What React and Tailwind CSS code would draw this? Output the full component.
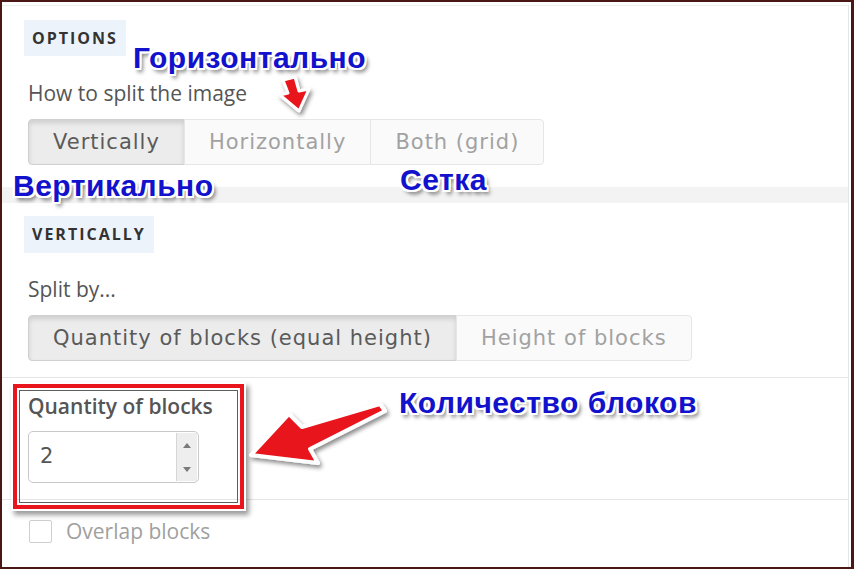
import React from "react";

const anno =
  "absolute whitespace-nowrap font-['Liberation_Sans',Arial,sans-serif] font-bold text-[30px] leading-none tracking-[0.5px] text-[#1212cc] [text-shadow:1px_1px_0_#fff,-1px_-1px_0_#fff,1px_-1px_0_#fff,-1px_1px_0_#fff,2px_0_0_#fff,-2px_0_0_#fff,0_2px_0_#fff,0_-2px_0_#fff,2px_2px_0_#fff,-2px_-2px_0_#fff,2px_-2px_0_#fff,-2px_2px_0_#fff,3px_4px_4px_rgba(0,0,0,0.6)]";

function Segmented({ items, active }) {
  return (
    <div className="flex font-['DejaVu_Sans',sans-serif] text-[21px] tracking-[1px]">
      {items.map((label, i) => {
        const isActive = i === active;
        const first = i === 0;
        const last = i === items.length - 1;
        return (
          <div
            key={label}
            className={
              "h-[46px] leading-[44px] px-6 border whitespace-nowrap " +
              (first ? "rounded-l-[4px] " : "-ml-px ") +
              (last ? "rounded-r-[4px] " : "") +
              (isActive
                ? "bg-[#ececec] text-[#5a5a5a] border-[#d0d0d0] shadow-[inset_0_3px_5px_rgba(0,0,0,0.13)]"
                : "bg-[#fafafa] text-[#a2a2a2] border-[#e6e6e6]")
            }
          >
            {label}
          </div>
        );
      })}
    </div>
  );
}

export default function App() {
  return (
    <div className="relative w-[854px] h-[569px] overflow-hidden bg-white border-2 border-r-[3px] border-[#4a1616] font-['Open_Sans',sans-serif]">
      <div className="mr-[2px] h-full border-r border-[#e6e6e6]">
        {/* Panel 1 */}
        <div className="mt-[3px] border-t border-[#eeeeee] pl-[22px] pt-[14px] pb-[22px]">
          <div className="inline-block h-[36px] px-2 bg-[#edf3fb] text-[16px] font-bold tracking-[2px] leading-[36px] text-[#333]">
            OPTIONS
          </div>
          <div className="mt-[23px] ml-[4px] text-[21px] leading-[28px] text-[#555]">
            How to split the image
          </div>
          <div className="mt-[12px] ml-[4px]">
            <Segmented items={["Vertically", "Horizontally", "Both (grid)"]} active={0} />
          </div>
        </div>

        {/* strip */}
        <div className="h-[16px] bg-[#f3f3f3]" />

        {/* Panel 2 */}
        <div className="pl-[22px] pt-[13px] pb-[16px]">
          <div className="inline-block h-[37px] px-2 bg-[#edf3fb] text-[16px] font-bold tracking-[2px] leading-[37px] text-[#333]">
            VERTICALLY
          </div>
          <div className="mt-[22px] ml-[4px] text-[21px] leading-[28px] text-[#555]">
            Split by...
          </div>
          <div className="mt-[12px] ml-[4px]">
            <Segmented items={["Quantity of blocks (equal height)", "Height of blocks"]} active={0} />
          </div>
        </div>

        {/* Quantity section */}
        <div className="border-t border-b border-[#e6e6e6] pl-[26px] pt-[14px] pb-[16px]">
          <div className="text-[21px] leading-[28px] font-semibold text-[#555]">Quantity of blocks</div>
          <div className="mt-[11px] flex w-[171px] h-[52px] border border-[#c9c9c9] rounded-[5px] bg-white overflow-hidden">
            <div className="flex-1 pl-[11px] flex items-center font-['DejaVu_Sans',sans-serif] text-[21px] text-[#555]">
              2
            </div>
            <div className="w-[21px] my-[1px] mr-[1px] bg-[#eeeeee] border-l border-[#d6d6d6] flex flex-col">
              <div className="flex-1 flex items-center justify-center">
                <div className="w-0 h-0 border-l-[4px] border-r-[4px] border-b-[5px] border-l-transparent border-r-transparent border-b-[#7a7a7a]" />
              </div>
              <div className="flex-1 flex items-center justify-center">
                <div className="w-0 h-0 border-l-[4px] border-r-[4px] border-t-[5px] border-l-transparent border-r-transparent border-t-[#7a7a7a]" />
              </div>
            </div>
          </div>
        </div>

        {/* Checkbox row */}
        <div className="pl-[27px] pt-[17px] flex items-center gap-[14px]">
          <div className="w-[23px] h-[23px] border-[1.5px] border-[#cfcfcf] rounded-[2px] bg-white" />
          <div className="text-[21px] leading-[28px] text-[#a0a0a0]">Overlap blocks</div>
        </div>
      </div>

      {/* Red highlight box */}
      <div className="absolute left-[11px] top-[382px] w-[231px] h-[125px] border-[4px] border-[#e8161c] shadow-[0_0_0_2px_#fff,3px_4px_5px_2px_rgba(0,0,0,0.4)]">
        <div className="absolute inset-[2px] border-[1.5px] border-[#5e5e5e]" />
      </div>

      {/* Arrows */}
      <svg className="absolute left-0 top-0 pointer-events-none" width="854" height="569" viewBox="0 0 854 569">
        <defs>
          <filter id="sh" x="-20%" y="-20%" width="150%" height="150%">
            <feDropShadow dx="2" dy="3" stdDeviation="2" floodColor="#000" floodOpacity="0.45" />
          </filter>
        </defs>
        <polygon
          points="281,78 293,75 297,89 307,87 297,109 278,93 286,91"
          fill="#e8141a"
          stroke="#fff"
          strokeWidth="3"
          strokeLinejoin="round"
          filter="url(#sh)"
        />
        <polygon
          points="249,453 287,412 300,425 378,402 383,409 308,447 316,461"
          fill="#e8141a"
          stroke="#fff"
          strokeWidth="4"
          strokeLinejoin="round"
          filter="url(#sh)"
        />
      </svg>

      {/* Annotation texts */}
      <div className={anno + " left-[131px] top-[41px]"}>Горизонтально</div>
      <div className={anno + " left-[11px] top-[169px]"}>Вертикально</div>
      <div className={anno + " left-[398px] top-[163px]"}>Сетка</div>
      <div className={anno + " left-[397px] top-[386px]"}>Количество блоков</div>
    </div>
  );
}
